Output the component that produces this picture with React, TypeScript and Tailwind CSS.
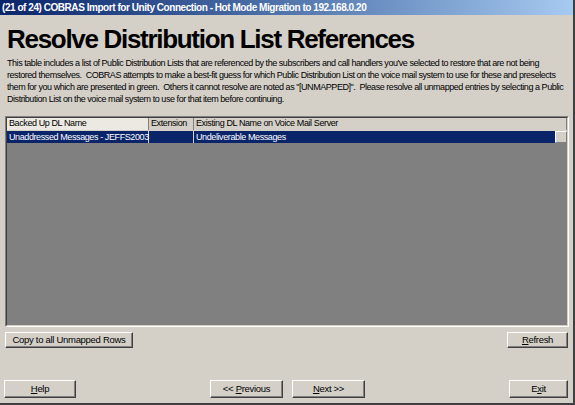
import React from 'react';

const rows = [
  { name: 'Unaddressed Messages - JEFFS2003', ext: '', existing: 'Undeliverable Messages' },
];

const introLines = [
  "This table includes a list of Public Distribution Lists that are referenced by the subscribers and call handlers you've selected to restore that are not being",
  'restored themselves.\u00a0 COBRAS attempts to make a best-fit guess for which Public Distribution List on the voice mail system to use for these and preselects',
  'them for you which are presented in green.\u00a0 Others it cannot resolve are noted as "[UNMAPPED]".\u00a0 Please resolve all unmapped entries by selecting a Public',
  'Distribution List on the voice mail system to use for that item before continuing.',
];

function Btn({ children, className = '' }: { children: React.ReactNode; className?: string }) {
  return (
    <button
      className={`bg-[#d4d0c8] text-[9.5px] tracking-[-0.3px] text-black border border-t-white border-l-white border-r-[#404040] border-b-[#404040] shadow-[inset_-1px_-1px_0_#808080] flex items-center justify-center whitespace-nowrap ${className}`}
    >
      {children}
    </button>
  );
}

export default function App() {
  return (
    <div className="w-[575px] h-[405px] bg-[#d4d0c8] flex flex-col font-['Liberation_Sans',Arial,sans-serif] text-black overflow-hidden border-r-2 border-b-2 border-r-[#404040] border-b-[#404040]">
      <div className="h-[15px] shrink-0 bg-gradient-to-r from-[#0a246a] to-[#a6caf0] text-white text-[10px] tracking-[-0.45px] font-bold leading-[15px] pl-[2px] whitespace-nowrap">
        (21 of 24) COBRAS Import for Unity Connection - Hot Mode Migration to 192.168.0.20
      </div>

      <h1 className="h-[32px] shrink-0 text-[26px] tracking-[-1.3px] font-bold leading-[32px] mt-[8px] ml-[7px] whitespace-nowrap">
        Resolve Distribution List References
      </h1>

      <div className="h-[55px] shrink-0 text-[9px] tracking-[-0.45px] leading-[12px] mt-[2px] ml-[7px]">
        {introLines.map((l) => (
          <div key={l} className="whitespace-nowrap">{l}</div>
        ))}
      </div>

      <div className="mt-[4px] ml-[5px] mr-[4px] h-[211px] shrink-0 bg-[#808080] border border-t-[#808080] border-l-[#808080] border-r-white border-b-white">
        <div className="h-full border border-t-[#404040] border-l-[#404040] border-r-[#d4d0c8] border-b-[#d4d0c8] flex flex-col">
          <div className="flex h-[12px] text-[9px] tracking-[-0.4px] leading-[11px] bg-[#d4d0c8]">
            <div className="w-[142px] pl-[2px] border-r border-r-[#808080] bg-[#ece9e2]">Backed Up DL Name</div>
            <div className="w-[45px] pl-[2px] border-r border-r-[#808080]">Extension</div>
            <div className="flex-1 pl-[2px] border-r border-r-[#808080]">Existing DL Name on Voice Mail Server</div>
          </div>
          {rows.map((r) => (
            <div key={r.name} className="flex h-[13px] text-[9px] tracking-[-0.4px] leading-[12px] text-white bg-[#0a246a] border-t border-t-[#d4d0c8]">
              <div className="w-[142px] pl-[2px] border-r border-r-[#d4d0c8] whitespace-nowrap">{r.name}</div>
              <div className="w-[45px] pl-[2px] border-r border-r-[#d4d0c8]">{r.ext}</div>
              <div className="flex-1 pl-[2px]">{r.existing}</div>
              <div className="w-[12px] bg-[#d4d0c8] border border-t-white border-l-white border-r-[#808080] border-b-[#808080]" />
            </div>
          ))}
        </div>
      </div>

      <div className="flex justify-between mt-[5px] ml-[5px] mr-[5px]">
        <Btn className="w-[128px] h-[16px]">Copy to all Unmapped Rows</Btn>
        <Btn className="w-[61px] h-[16px]">
          <span><u>R</u>efresh</span>
        </Btn>
      </div>

      <div className="flex items-center mt-[32px] ml-[4px] mr-[5px]">
        <Btn className="w-[72px] h-[18px]">
          <span><u>H</u>elp</span>
        </Btn>
        <Btn className="w-[73px] h-[18px] ml-[134px]">
          <span>&lt;&lt; <u>P</u>revious</span>
        </Btn>
        <Btn className="w-[73px] h-[18px] ml-[9px]">
          <span><u>N</u>ext &gt;&gt;</span>
        </Btn>
        <Btn className="w-[59px] h-[18px] ml-auto">
          <span>E<u>x</u>it</span>
        </Btn>
      </div>
    </div>
  );
}
